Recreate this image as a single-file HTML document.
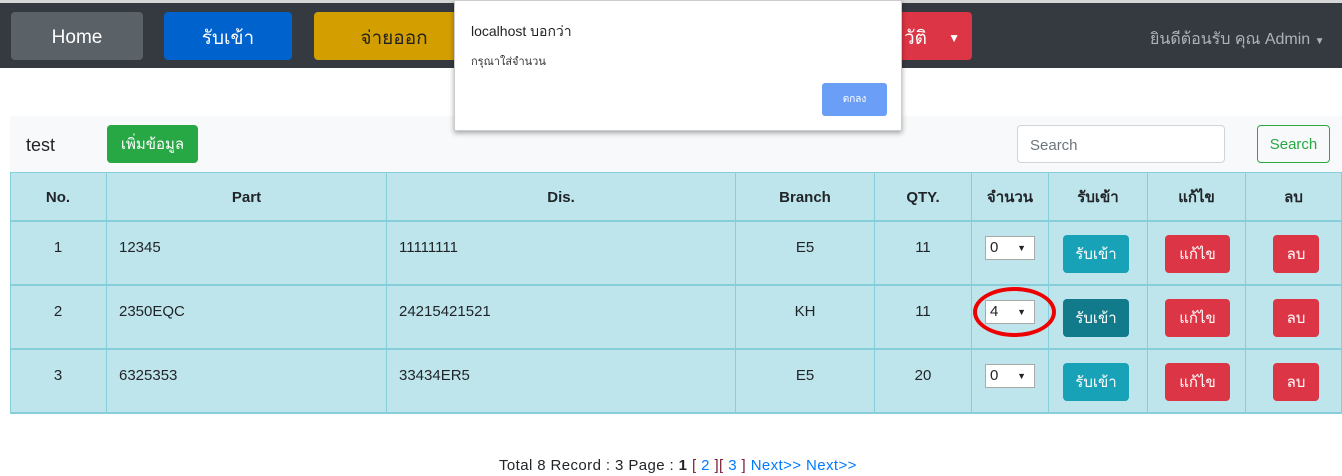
<!DOCTYPE html>
<html><head><meta charset="utf-8"><style>
body{margin:0;width:1342px;height:476px;position:relative;overflow:hidden;background:#fff;font-family:"Liberation Sans","DejaVu Sans",sans-serif;color:#212529}
.a{position:absolute;box-sizing:border-box}
.btn{position:absolute;box-sizing:border-box;border-radius:4px;color:#fff;display:flex;align-items:center;justify-content:center}
.c{position:absolute;box-sizing:border-box;border-right:1px solid #86cfda;border-bottom:2px solid #86cfda;display:flex;align-items:center;font-size:15px}
.cc{justify-content:center}.cl{padding-left:12px}
.h{font-weight:bold}
.sel{position:absolute;width:50px;height:24px;background:#fff;border:1px solid #a9a9a9;font-size:15px;padding-left:4px;box-sizing:border-box;line-height:22px}
.sel:after{content:"▼";position:absolute;right:8px;top:0;font-size:9px}
</style></head><body>
<div class="a" style="left:0;top:0;width:1342px;height:3px;background:#d6d6d6"></div>
<div class="a" style="left:0;top:3px;width:1342px;height:65px;background:#343a40"></div>
<div class="btn" style="left:11px;top:12px;width:132px;height:48px;background:#5a6268;font-size:19px;padding-top:4px">Home</div>
<div class="btn" style="left:164px;top:12px;width:128px;height:48px;background:#0062cc;font-size:19px;padding-top:4px">รับเข้า</div>
<div class="btn" style="left:314px;top:12px;width:160px;height:48px;background:#d39e00;color:#222;font-size:19px;padding-top:4px">จ่ายออก</div>
<div class="btn" style="left:860px;top:12px;width:112px;height:48px;background:#dc3545;font-size:19px;justify-content:flex-end;padding-right:12px;padding-top:4px">วัติ&nbsp;&nbsp;&nbsp;&nbsp;<span style="font-size:12px">▼</span></div>
<div class="a" style="left:1150px;top:27px;color:#aeb3b8;font-size:16px">ยินดีต้อนรับ คุณ Admin <span style="font-size:10px">▼</span></div>
<div class="a" style="left:10px;top:116px;width:1332px;height:56px;background:#f8f9fa"></div>
<div class="a" style="left:26px;top:135px;font-size:18px">test</div>
<div class="btn" style="left:107px;top:125px;width:91px;height:38px;background:#28a745;font-size:15px">เพิ่มข้อมูล</div>
<div class="a" style="left:1017px;top:125px;width:208px;height:38px;background:#fff;border:1px solid #ced4da;border-radius:4px;padding:11px 12px;font-size:15px;color:#6c757d">Search</div>
<div class="btn" style="left:1257px;top:125px;width:73px;height:38px;border:1px solid #28a745;color:#28a745;font-size:15px">Search</div>
<div class="a" style="left:454px;top:0;width:448px;height:131px;background:#fff;box-shadow:0 2px 5px rgba(0,0,0,.35);border:1px solid #ccc;z-index:10">
<div class="a" style="left:16px;top:20px;font-size:14px;color:#222">localhost บอกว่า</div>
<div class="a" style="left:16px;top:51px;font-size:11px;color:#333">กรุณาใส่จำนวน</div>
<div class="btn" style="left:367px;top:82px;width:65px;height:33px;background:#6b9ef7;font-size:10px;border-radius:3px">ตกลง</div>
</div>
<div class="a" style="left:10px;top:172px;width:1332px;height:242px;background:#bee5eb;border-left:1px solid #86cfda;border-top:1px solid #86cfda"></div>
<div id="t"></div>
<script>
var cols=[10,107,387,736,875,972,1049,1148,1246,1342];
var rows=[172,222,286,350,414];
var H=["No.","Part","Dis.","Branch","QTY.","จำนวน","รับเข้า","แก้ไข","ลบ"];
var D=[["1","12345","11111111","E5","11","0"],["2","2350EQC","24215421521","KH","11","4"],["3","6325353","33434ER5","E5","20","0"]];
var s="";
for(var r=0;r<4;r++){for(var c=0;c<9;c++){
 var x=cols[c],w=cols[c+1]-x,y=rows[r],h=rows[r+1]-y;
 var al=(r>0&&(c==1||c==2))?"cl":"cc";
 var txt="";
 if(r==0)txt=H[c];else if(c<5)txt=D[r-1][c];
 var extra=r>0?"align-items:flex-start;padding-top:17px;":"padding-top:2px;";
 s+='<div class="c '+al+(r==0?' h':'')+'" style="left:'+x+'px;top:'+y+'px;width:'+w+'px;height:'+h+'px;'+extra+'">'+txt+'</div>';
}}
for(var r=0;r<3;r++){var y=rows[r+1];
 s+='<div class="sel" style="left:985px;top:'+(y+14)+'px">'+D[r][5]+'</div>';
 s+='<div class="btn" style="left:1063px;top:'+(y+13)+'px;width:66px;height:38px;background:'+(r==1?'#117a8b':'#17a2b8')+';font-size:15px">รับเข้า</div>';
 s+='<div class="btn" style="left:1165px;top:'+(y+13)+'px;width:65px;height:38px;background:#dc3545;font-size:15px">แก้ไข</div>';
 s+='<div class="btn" style="left:1273px;top:'+(y+13)+'px;width:46px;height:38px;background:#dc3545;font-size:15px">ลบ</div>';
}
document.getElementById("t").innerHTML=s;
</script>
<div class="a" style="left:973px;top:287px;width:83px;height:50px;border:4px solid #e00;border-radius:50%"></div>
<div class="a" style="left:499px;top:457px;font-size:15px;letter-spacing:0.4px;white-space:nowrap">Total 8 Record : 3 Page : <b>1</b> <span style="color:#7a1c3a">[</span> <span style="color:#007bff">2</span> <span style="color:#7a1c3a">][</span> <span style="color:#007bff">3</span> <span style="color:#7a1c3a">]</span> <span style="color:#007bff">Next&gt;&gt; Next&gt;&gt;</span></div>
</body></html>
